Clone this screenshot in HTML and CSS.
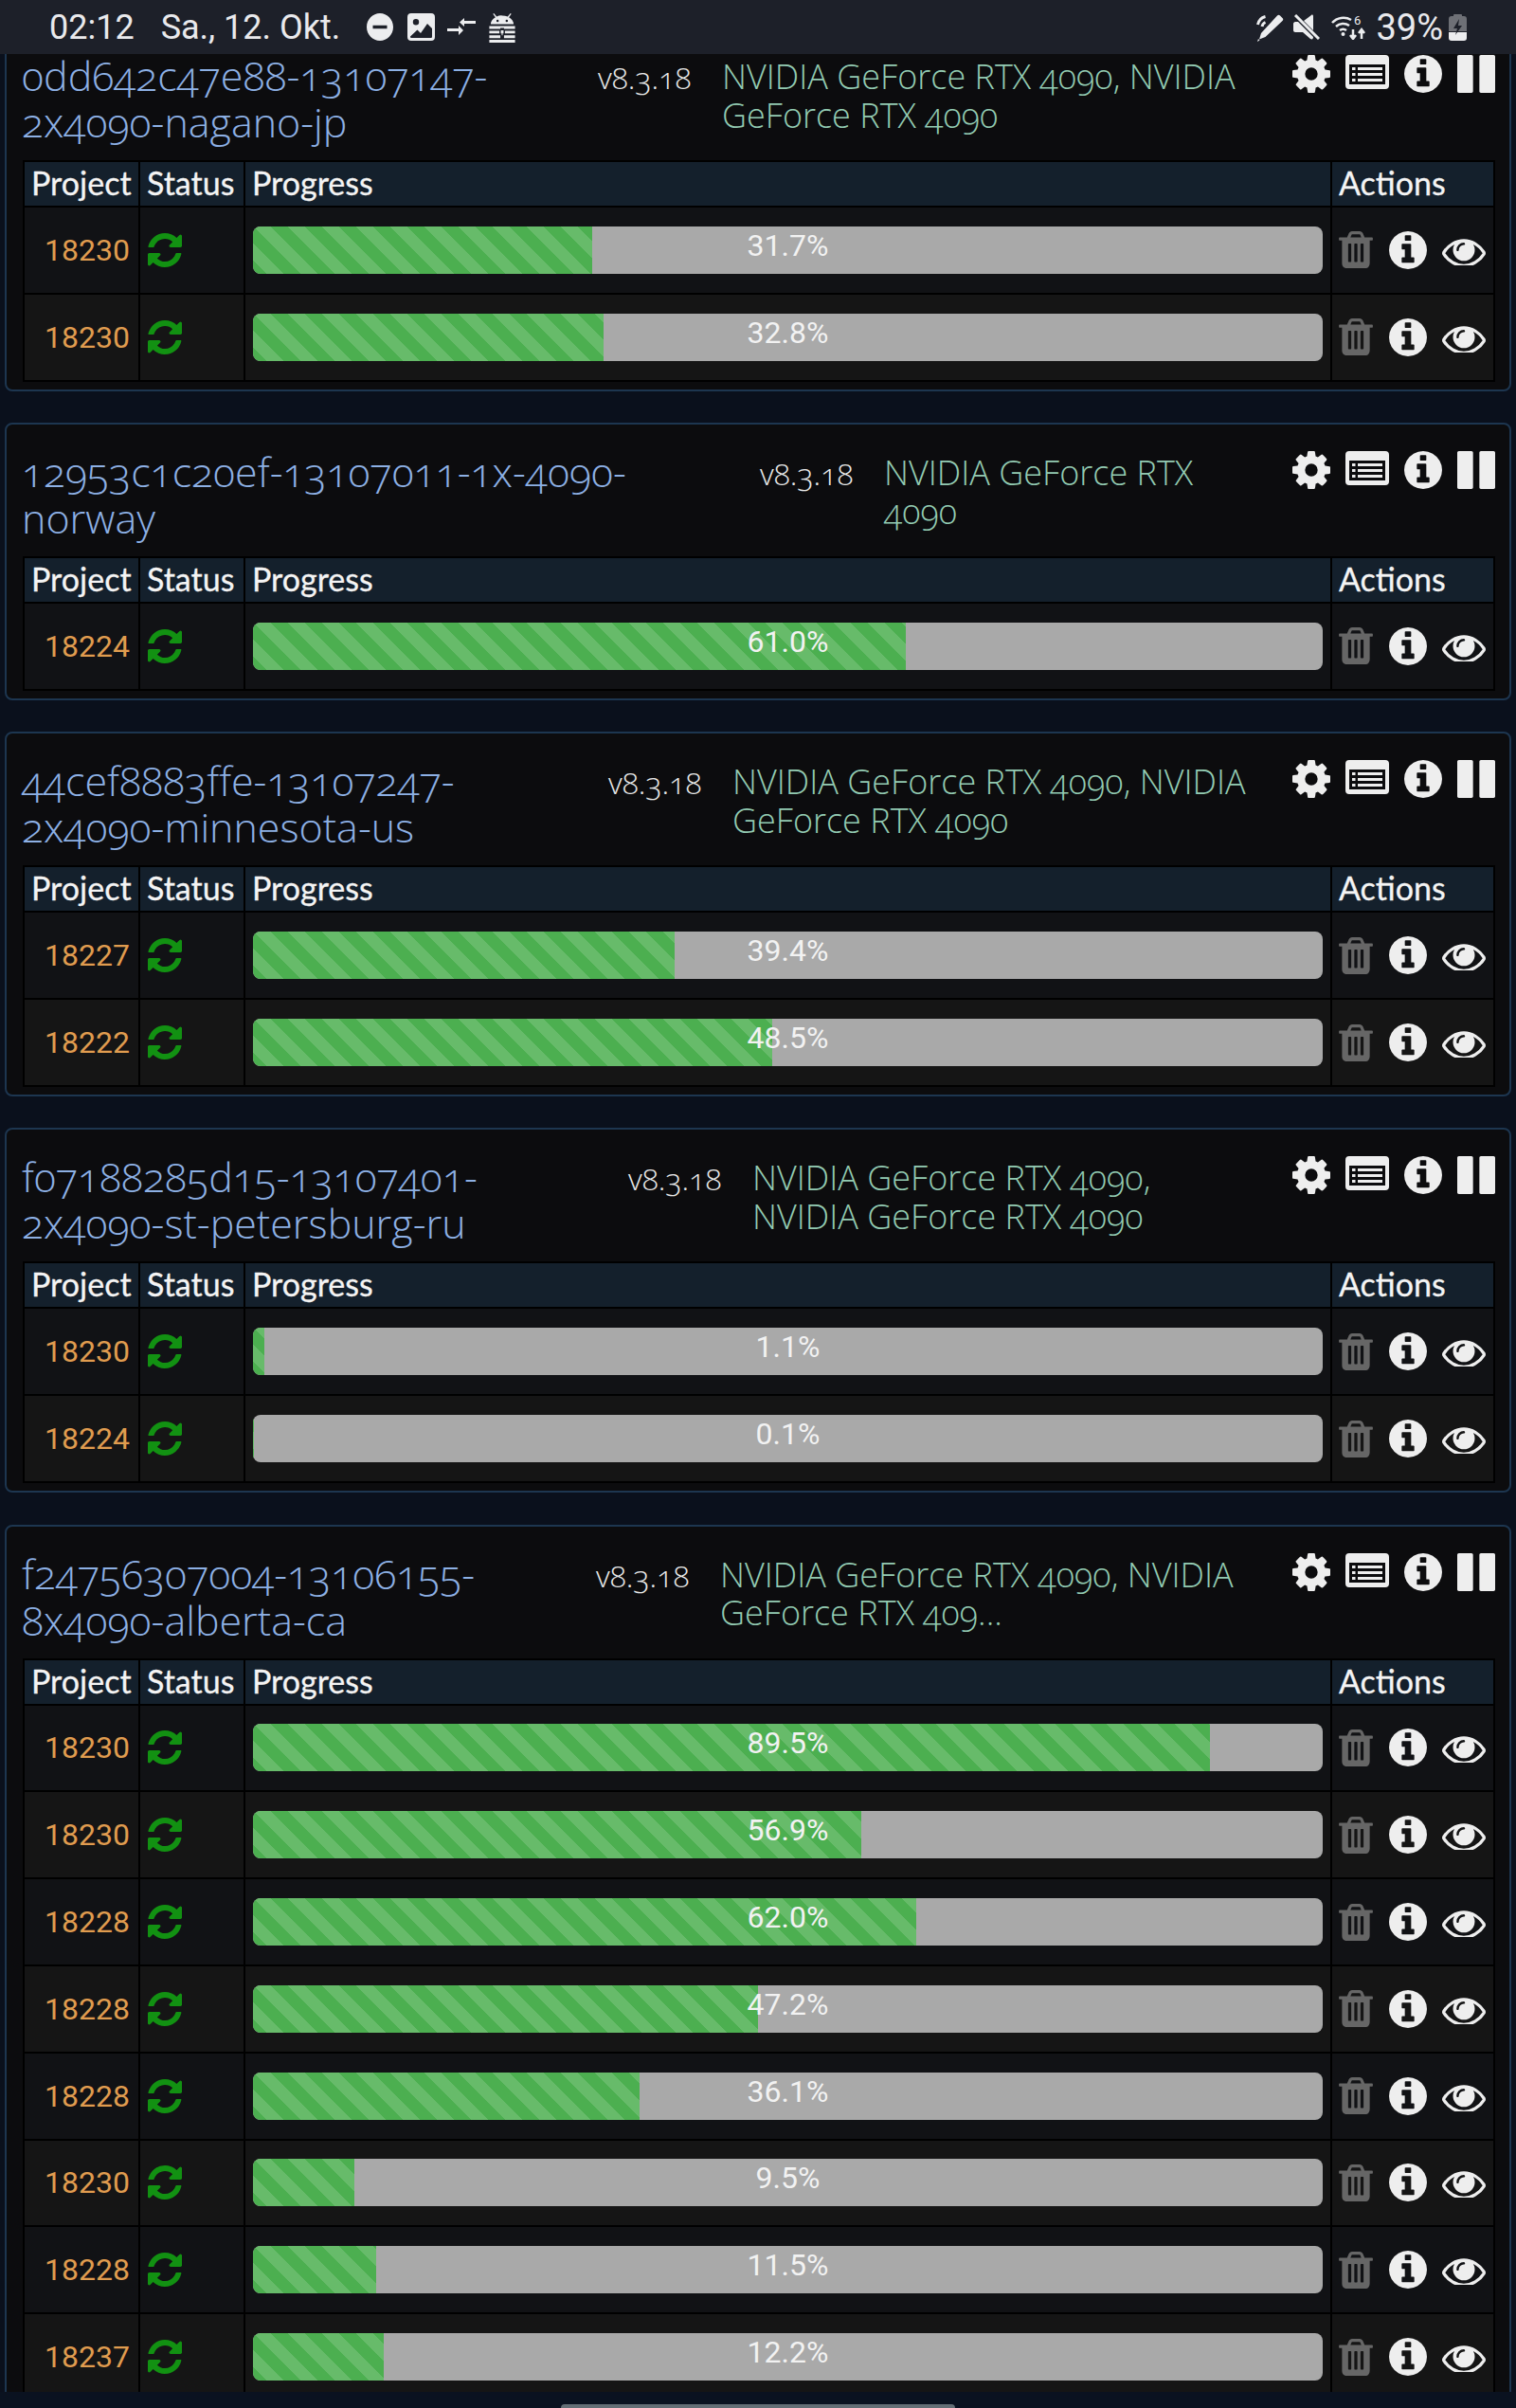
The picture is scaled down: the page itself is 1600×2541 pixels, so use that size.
FILE: index.html
```html
<!DOCTYPE html>
<html lang="de">
<head>
<meta charset="utf-8">
<title>Instances</title>
<link rel="stylesheet" href="styles.css">
</head>
<body>
<svg class="defs" width="0" height="0" aria-hidden="true">
  <symbol id="i-cog" viewBox="128 128 1536 1536"><path fill-rule="evenodd" d="M1152 896q0-106-75-181t-181-75-181 75-75 181 75 181 181 75 181-75 75-181zm512-109v222q0 12-8 23t-20 13l-185 28q-19 54-39 91 35 50 107 138 10 12 10 25t-9 23q-27 37-99 108t-94 71q-12 0-26-9l-138-108q-44 23-91 38-16 136-29 186-7 28-36 28h-222q-14 0-24.5-8.5t-11.5-21.5l-28-184q-49-16-90-37l-141 107q-10 9-25 9-14 0-25-11-126-114-165-168-7-10-7-23 0-12 8-23 15-21 51-66.5t54-70.5q-27-50-41-99l-183-27q-13-2-21-12.5t-8-23.5v-222q0-12 8-23t19-13l186-28q14-46 39-92-40-57-107-138-10-12-10-24 0-10 9-23 26-36 98.5-107.5t94.5-71.5q13 0 26 10l138 107q44-23 91-38 16-136 29-186 7-28 36-28h222q14 0 24.5 8.5t11.5 21.5l28 184q49 16 90 37l142-107q9-9 24-9 13 0 25 10 129 119 165 170 7 8 7 22 0 12-8 23-15 21-51 66.5t-54 70.5q26 50 41 98l183 28q13 2 21 12.5t8 23.5z"/></symbol>
  <symbol id="i-info" viewBox="128 128 1536 1536"><path fill-rule="evenodd" d="M1152 1376v-160q0-14-9-23t-23-9h-96v-512q0-14-9-23t-23-9h-320q-14 0-23 9t-9 23v160q0 14 9 23t23 9h96v320h-96q-14 0-23 9t-9 23v160q0 14 9 23t23 9h448q14 0 23-9t9-23zm-128-896v-160q0-14-9-23t-23-9h-192q-14 0-23 9t-9 23v160q0 14 9 23t23 9h192q14 0 23-9t9-23zm640 416q0 209-103 385.5t-279.5 279.5-385.5 103-385.5-103-279.5-279.5-103-385.5 103-385.5 279.5-279.5 385.5-103 385.5 103 279.5 279.5 103 385.5z"/></symbol>
  <symbol id="i-pause" viewBox="128 128 1536 1536"><path d="M1664 192v1408q0 26-19 45t-45 19h-512q-26 0-45-19t-19-45v-1408q0-26 19-45t45-19h512q26 0 45 19t19 45zm-896 0v1408q0 26-19 45t-45 19h-512q-26 0-45-19t-19-45v-1408q0-26 19-45t45-19h512q26 0 45 19t19 45z"/></symbol>
  <symbol id="i-list" viewBox="0 0 46 36"><path fill-rule="evenodd" d="M4 0h38a4 4 0 0 1 4 4v28a4 4 0 0 1-4 4H4a4 4 0 0 1-4-4V4a4 4 0 0 1 4-4zM4 10v21h38V10zM7 13h3.500v3H7zM13 13h26v3H13zM7 19h3.500v3H7zM13 19h26v3H13zM7 25h3.500v3H7zM13 25h26v3H13z"/></symbol>
  <symbol id="i-trash" viewBox="192 128 1408 1536"><path fill-rule="evenodd" d="M704 1376v-704q0-14-9-23t-23-9h-64q-14 0-23 9t-9 23v704q0 14 9 23t23 9h64q14 0 23-9t9-23zm256 0v-704q0-14-9-23t-23-9h-64q-14 0-23 9t-9 23v704q0 14 9 23t23 9h64q14 0 23-9t9-23zm256 0v-704q0-14-9-23t-23-9h-64q-14 0-23 9t-9 23v704q0 14 9 23t23 9h64q14 0 23-9t9-23zm-544-992h448l-48-117q-7-9-17-11h-317q-10 2-17 11zm928 32v64q0 14-9 23t-23 9h-96v948q0 83-47 143.5t-113 60.5h-832q-66 0-113-58.5t-47-141.5v-952h-96q-14 0-23-9t-9-23v-64q0-14 9-23t23-9h309l70-167q15-37 54-63t79-26h320q40 0 79 26t54 63l70 167h309q14 0 23 9t9 23z"/></symbol>
  <symbol id="i-eye" viewBox="0 336 1792 1120"><path fill-rule="evenodd" d="M1664 960q-152-236-381-353 61 104 61 225 0 185-131.500 316.500t-316.500 131.500-316.500-131.500-131.500-316.500q0-121 61-225-229 117-381 353 133 205 333.500 326.500t434.500 121.500 434.500-121.500 333.500-326.500zm-720-384q0-20-14-34t-34-14q-125 0-214.500 89.500t-89.500 214.500q0 20 14 34t34 14 34-14 14-34q0-86 61-147t147-61q20 0 34-14t14-34zm848 384q0 34-20 69-140 230-376.500 368.500t-499.500 138.500-499.500-139-376.500-368q-20-35-20-69t20-69q140-229 376.500-368t499.500-139 499.500 139 376.500 368q20 35 20 69z"/></symbol>
  <symbol id="i-refresh" viewBox="128 128 1536 1536"><path d="M1639 1056q0 5-1 7-64 268-268 434.500t-478 166.500q-146 0-282.500-55t-243.500-157l-129 129q-19 19-45 19t-45-19-19-45v-448q0-26 19-45t45-19h448q26 0 45 19t19 45-19 45l-137 137q71 66 161 102t187 36q134 0 250-65t186-179q11-17 53-117 8-23 30-23h192q13 0 22.500 9.500t9.500 22.500zm25-800v448q0 26-19 45t-45 19h-448q-26 0-45-19t-19-45 19-45l138-138q-148-137-349-137-134 0-250 65t-186 179q-11 17-53 117-8 23-30 23h-199q-13 0-22.500-9.500t-9.500-22.500v-7q65-268 270-434.500t480-166.500q146 0 284 55.500t245 156.500l130-129q19-19 45-19t45 19 19 45z"/></symbol>
</svg>

<div class="phone">
  <header class="statusbar">
    <div class="sb-left">
      <span class="sb-time">02:12</span>
      <span class="sb-date">Sa., 12. Okt.</span>
      <svg class="sb-ic sb-dnd" width="28" height="29" viewBox="0 0 28 29"><path fill-rule="evenodd" d="M14 0C21.700 0 28 6.500 28 14.500S21.700 29 14 29 0 22.500 0 14.500 6.300 0 14 0zM6.500 12.800v3.400h15v-3.400z"/></svg>
      <svg class="sb-ic sb-img" width="29" height="29" viewBox="0 0 29 29"><path fill-rule="evenodd" d="M4 0h21a4 4 0 0 1 4 4v21a4 4 0 0 1-4 4H4a4 4 0 0 1-4-4V4a4 4 0 0 1 4-4zM9 6a3.200 3.200 0 1 0 0 6.400A3.200 3.200 0 0 0 9 6zM3 24.500C3 25.500 3.500 26 4.500 26h20c1 0 1.500-.5 1.500-1.500V16l-5-5-7 10-3.500-3.500z"/></svg>
      <svg class="sb-ic sb-arrows" width="30" height="19" viewBox="0 0 30 19"><path d="M13 4.500L18 0v3h12v3H18v3zM0 11h12V8l5 5-5 5v-4H0z"/></svg>
      <svg class="sb-ic sb-lock" width="32" height="32" viewBox="0 0 32 33"><path fill-rule="evenodd" d="M7 1l3 3.600A12 12 0 0 1 16 3.500c2.200 0 4.200.4 6 1.100L25 1l1 .7-2.700 3.700C26.500 7.300 28.500 10 28.500 13h-25c0-3 2-5.700 5.200-7.600L6 1.700zM11 8a1.300 1.300 0 1 0 0 2.600A1.300 1.300 0 0 0 11 8zM21 8a1.300 1.300 0 1 0 0 2.600A1.300 1.300 0 0 0 21 8zM2 15h28v3H18v-1h-4v1H2zM2 20h11v3H2zM19 20h11v3H19zM14.500 19.500h3V23h-1v2h-1v-2h-1zM2 25h12v3H2zM18 25h12v3H18zM2 30h28v3H2z"/></svg>
    </div>
    <div class="sb-right">
      <svg class="sb-ic sb-pen" width="29" height="30" viewBox="0 0 29 30"><path d="M22 2.500c1-1 2-1 3 0l2.500 2.500c1 1 1 2 0 3L9.500 25 3 27.500 5 21zM2 27l1.500 1.500L1 30z"/><path class="sb-line" d="M1.500 12a11 11 0 0 1 8-8.500M6 14a6 6 0 0 1 3.500-4.500"/></svg>
      <svg class="sb-ic sb-mute" width="28" height="27" viewBox="0 0 28 27"><path d="M0 10c0-1 1-2 2-2h3l16 16c0 2-1 3-3 2l-8-7H2c-1 0-2-1-2-2zM11 7l8-6c1-1 2 0 2 1v15z"/><path class="sb-line" d="M2 1l25 25"/></svg>
      <svg class="sb-ic sb-wifi" width="37" height="27" viewBox="0 0 37 27"><path class="sb-line thin" d="M1 9a16 16 0 0 1 20-3M5 13a11 11 0 0 1 14-1M9 17a6 6 0 0 1 7 0"/><circle cx="12.500" cy="21" r="2"/><path class="sb-line thin" d="M23 16v9M20 22l3 4 3-4M32 26v-9M29 20l3-4 3 4"/><text class="sb-six" x="24" y="11">6</text></svg>
      <span class="sb-batt">39%</span>
      <svg class="sb-ic" width="19" height="28" viewBox="0 0 19 28"><path class="sb-empty" d="M5 2V1a1 1 0 0 1 1-1h7a1 1 0 0 1 1 1v1h2a3 3 0 0 1 3 3v13H0V5a3 3 0 0 1 3-3z"/><path d="M0 19h19v6a3 3 0 0 1-3 3H3a3 3 0 0 1-3-3z"/><path d="M11 5L5 15h4l-2 7 7-10h-4z" class="sb-bolt"/></svg>
    </div>
  </header>

  <main class="viewport">
    <div class="cards">

      <section class="card">
        <div class="head">
          <h4 class="name w1">0dd642c47e88-13107147-2x4090-nagano-jp</h4>
          <span class="ver">v8.3.18</span>
          <span class="gpu">NVIDIA GeForce RTX 4090, NVIDIA GeForce RTX 4090</span>
          <div class="tools"><svg class="t-cog"><use href="#i-cog"/></svg><svg class="t-list"><use href="#i-list"/></svg><svg class="t-info"><use href="#i-info"/></svg><svg class="t-pause"><use href="#i-pause"/></svg></div>
        </div>
        <div class="tbl">
          <div class="th">Project</div><div class="th">Status</div><div class="th">Progress</div><div class="th">Actions</div>
          <div class="td num">18230</div><div class="td st"><svg class="ref"><use href="#i-refresh"/></svg></div><div class="td pg"><div class="bar"><div class="fill" style="width:31.7%"></div><span class="pct">31.7%</span></div></div><div class="td act"><svg class="a-trash"><use href="#i-trash"/></svg><svg class="a-info"><use href="#i-info"/></svg><svg class="a-eye"><use href="#i-eye"/></svg></div>
          <div class="td num alt">18230</div><div class="td st alt"><svg class="ref"><use href="#i-refresh"/></svg></div><div class="td pg alt"><div class="bar"><div class="fill" style="width:32.8%"></div><span class="pct">32.8%</span></div></div><div class="td act alt"><svg class="a-trash"><use href="#i-trash"/></svg><svg class="a-info"><use href="#i-info"/></svg><svg class="a-eye"><use href="#i-eye"/></svg></div>
        </div>
      </section>

      <section class="card">
        <div class="head">
          <h4 class="name w2">12953c1c20ef-13107011-1x-4090-norway</h4>
          <span class="ver">v8.3.18</span>
          <span class="gpu">NVIDIA GeForce RTX 4090</span>
          <div class="tools"><svg class="t-cog"><use href="#i-cog"/></svg><svg class="t-list"><use href="#i-list"/></svg><svg class="t-info"><use href="#i-info"/></svg><svg class="t-pause"><use href="#i-pause"/></svg></div>
        </div>
        <div class="tbl">
          <div class="th">Project</div><div class="th">Status</div><div class="th">Progress</div><div class="th">Actions</div>
          <div class="td num">18224</div><div class="td st"><svg class="ref"><use href="#i-refresh"/></svg></div><div class="td pg"><div class="bar"><div class="fill" style="width:61%"></div><span class="pct">61.0%</span></div></div><div class="td act"><svg class="a-trash"><use href="#i-trash"/></svg><svg class="a-info"><use href="#i-info"/></svg><svg class="a-eye"><use href="#i-eye"/></svg></div>
        </div>
      </section>

      <section class="card">
        <div class="head">
          <h4 class="name w3">44cef8883ffe-13107247-2x4090-minnesota-us</h4>
          <span class="ver">v8.3.18</span>
          <span class="gpu">NVIDIA GeForce RTX 4090, NVIDIA GeForce RTX 4090</span>
          <div class="tools"><svg class="t-cog"><use href="#i-cog"/></svg><svg class="t-list"><use href="#i-list"/></svg><svg class="t-info"><use href="#i-info"/></svg><svg class="t-pause"><use href="#i-pause"/></svg></div>
        </div>
        <div class="tbl">
          <div class="th">Project</div><div class="th">Status</div><div class="th">Progress</div><div class="th">Actions</div>
          <div class="td num">18227</div><div class="td st"><svg class="ref"><use href="#i-refresh"/></svg></div><div class="td pg"><div class="bar"><div class="fill" style="width:39.4%"></div><span class="pct">39.4%</span></div></div><div class="td act"><svg class="a-trash"><use href="#i-trash"/></svg><svg class="a-info"><use href="#i-info"/></svg><svg class="a-eye"><use href="#i-eye"/></svg></div>
          <div class="td num alt">18222</div><div class="td st alt"><svg class="ref"><use href="#i-refresh"/></svg></div><div class="td pg alt"><div class="bar"><div class="fill" style="width:48.5%"></div><span class="pct">48.5%</span></div></div><div class="td act alt"><svg class="a-trash"><use href="#i-trash"/></svg><svg class="a-info"><use href="#i-info"/></svg><svg class="a-eye"><use href="#i-eye"/></svg></div>
        </div>
      </section>

      <section class="card">
        <div class="head">
          <h4 class="name w4">f07188285d15-13107401-2x4090-st-petersburg-ru</h4>
          <span class="ver">v8.3.18</span>
          <span class="gpu">NVIDIA GeForce RTX 4090, NVIDIA GeForce RTX 4090</span>
          <div class="tools"><svg class="t-cog"><use href="#i-cog"/></svg><svg class="t-list"><use href="#i-list"/></svg><svg class="t-info"><use href="#i-info"/></svg><svg class="t-pause"><use href="#i-pause"/></svg></div>
        </div>
        <div class="tbl">
          <div class="th">Project</div><div class="th">Status</div><div class="th">Progress</div><div class="th">Actions</div>
          <div class="td num">18230</div><div class="td st"><svg class="ref"><use href="#i-refresh"/></svg></div><div class="td pg"><div class="bar"><div class="fill" style="width:1.1%"></div><span class="pct">1.1%</span></div></div><div class="td act"><svg class="a-trash"><use href="#i-trash"/></svg><svg class="a-info"><use href="#i-info"/></svg><svg class="a-eye"><use href="#i-eye"/></svg></div>
          <div class="td num alt">18224</div><div class="td st alt"><svg class="ref"><use href="#i-refresh"/></svg></div><div class="td pg alt"><div class="bar"><div class="fill" style="width:0.1%"></div><span class="pct">0.1%</span></div></div><div class="td act alt"><svg class="a-trash"><use href="#i-trash"/></svg><svg class="a-info"><use href="#i-info"/></svg><svg class="a-eye"><use href="#i-eye"/></svg></div>
        </div>
      </section>

      <section class="card">
        <div class="head">
          <h4 class="name w5">f24756307004-13106155-8x4090-alberta-ca</h4>
          <span class="ver">v8.3.18</span>
          <span class="gpu">NVIDIA GeForce RTX 4090, NVIDIA GeForce RTX 409...</span>
          <div class="tools"><svg class="t-cog"><use href="#i-cog"/></svg><svg class="t-list"><use href="#i-list"/></svg><svg class="t-info"><use href="#i-info"/></svg><svg class="t-pause"><use href="#i-pause"/></svg></div>
        </div>
        <div class="tbl">
          <div class="th">Project</div><div class="th">Status</div><div class="th">Progress</div><div class="th">Actions</div>
          <div class="td num">18230</div><div class="td st"><svg class="ref"><use href="#i-refresh"/></svg></div><div class="td pg"><div class="bar"><div class="fill" style="width:89.5%"></div><span class="pct">89.5%</span></div></div><div class="td act"><svg class="a-trash"><use href="#i-trash"/></svg><svg class="a-info"><use href="#i-info"/></svg><svg class="a-eye"><use href="#i-eye"/></svg></div>
          <div class="td num alt">18230</div><div class="td st alt"><svg class="ref"><use href="#i-refresh"/></svg></div><div class="td pg alt"><div class="bar"><div class="fill" style="width:56.9%"></div><span class="pct">56.9%</span></div></div><div class="td act alt"><svg class="a-trash"><use href="#i-trash"/></svg><svg class="a-info"><use href="#i-info"/></svg><svg class="a-eye"><use href="#i-eye"/></svg></div>
          <div class="td num">18228</div><div class="td st"><svg class="ref"><use href="#i-refresh"/></svg></div><div class="td pg"><div class="bar"><div class="fill" style="width:62%"></div><span class="pct">62.0%</span></div></div><div class="td act"><svg class="a-trash"><use href="#i-trash"/></svg><svg class="a-info"><use href="#i-info"/></svg><svg class="a-eye"><use href="#i-eye"/></svg></div>
          <div class="td num alt">18228</div><div class="td st alt"><svg class="ref"><use href="#i-refresh"/></svg></div><div class="td pg alt"><div class="bar"><div class="fill" style="width:47.2%"></div><span class="pct">47.2%</span></div></div><div class="td act alt"><svg class="a-trash"><use href="#i-trash"/></svg><svg class="a-info"><use href="#i-info"/></svg><svg class="a-eye"><use href="#i-eye"/></svg></div>
          <div class="td num">18228</div><div class="td st"><svg class="ref"><use href="#i-refresh"/></svg></div><div class="td pg"><div class="bar"><div class="fill" style="width:36.1%"></div><span class="pct">36.1%</span></div></div><div class="td act"><svg class="a-trash"><use href="#i-trash"/></svg><svg class="a-info"><use href="#i-info"/></svg><svg class="a-eye"><use href="#i-eye"/></svg></div>
          <div class="td num alt">18230</div><div class="td st alt"><svg class="ref"><use href="#i-refresh"/></svg></div><div class="td pg alt"><div class="bar"><div class="fill" style="width:9.5%"></div><span class="pct">9.5%</span></div></div><div class="td act alt"><svg class="a-trash"><use href="#i-trash"/></svg><svg class="a-info"><use href="#i-info"/></svg><svg class="a-eye"><use href="#i-eye"/></svg></div>
          <div class="td num">18228</div><div class="td st"><svg class="ref"><use href="#i-refresh"/></svg></div><div class="td pg"><div class="bar"><div class="fill" style="width:11.5%"></div><span class="pct">11.5%</span></div></div><div class="td act"><svg class="a-trash"><use href="#i-trash"/></svg><svg class="a-info"><use href="#i-info"/></svg><svg class="a-eye"><use href="#i-eye"/></svg></div>
          <div class="td num alt">18237</div><div class="td st alt"><svg class="ref"><use href="#i-refresh"/></svg></div><div class="td pg alt"><div class="bar"><div class="fill" style="width:12.2%"></div><span class="pct">12.2%</span></div></div><div class="td act alt"><svg class="a-trash"><use href="#i-trash"/></svg><svg class="a-info"><use href="#i-info"/></svg><svg class="a-eye"><use href="#i-eye"/></svg></div>
        </div>
      </section>

    </div>
  </main>

  <footer class="navbar"><span class="pill"></span></footer>
</div>
</body>
</html>
```

FILE: styles.css
```css
* { box-sizing: border-box; }
html, body { margin: 0; padding: 0; }
body { background: #0a101c; font-family: "Lato", "Open Sans", sans-serif; color: #eee; }
.defs { position: absolute; }

.phone { width: 1600px; height: 2541px; display: flex; flex-direction: column; overflow: hidden; }

/* status bar */
.statusbar { flex: 0 0 57px; background: #1d2029; display: flex; justify-content: space-between; align-items: center; padding: 0 52px 0 52px; color: #e9e9ec; font-family: "Roboto", sans-serif; font-size: 36px; }
.sb-left, .sb-right { display: flex; align-items: center; }
.sb-time { margin-right: 28px; }
.sb-date { margin-right: 28px; }
.sb-ic { fill: #ecedef; flex: none; }
.sb-dnd { margin-right: 15px; }
.sb-img { margin-right: 13px; }
.sb-arrows { margin-right: 12px; }
.sb-pen { margin-right: 10px; }
.sb-mute { margin-right: 12px; }
.sb-wifi { margin-right: 10px; }
.sb-line { fill: none; stroke: #ecedef; stroke-width: 3; }
.sb-line.thin { stroke-width: 2.500; }
.sb-six { font-size: 13px; font-family: "Roboto", sans-serif; }
.sb-empty { fill: #6e7076; }
.sb-bolt { fill: #1d2029; }
.sb-batt { margin-right: 6px; font-size: 38px; }

/* scrolled region */
.viewport { flex: 1 1 auto; overflow: hidden; min-height: 0; background: #0a101c; }
.cards { margin-top: -29px; padding: 0 5px; display: flex; flex-direction: column; gap: 33.500px; }

.card { background: #0c0c0e; border: 2px solid #1d3650; border-radius: 8px; padding: 0 15px 8px 17px; }

.head { display: flex; align-items: flex-start; height: 139px; padding-top: 25px; margin: 0 1px 0 -1px; }
.name { margin: 0; font-family: "Open Sans", sans-serif; font-weight: 300; font-size: 43px; line-height: 49px; color: #8db0e4; font-variant-numeric: oldstyle-nums; overflow-wrap: anywhere; flex: none; }
.w1 { width: 608px; padding-right: 90px; }
.w2 { width: 779px; padding-right: 110px; }
.w3 { width: 619px; padding-right: 110px; }
.w4 { width: 640px; padding-right: 110px; }
.w5 { width: 606px; padding-right: 90px; }
.ver { flex: none; width: 131px; padding-top: 3px; font-family: "Open Sans", sans-serif; font-weight: 300; font-size: 32px; line-height: 48px; color: #e8e8e8; font-variant-numeric: oldstyle-nums; }
.gpu { flex: 1 1 0; min-width: 0; padding-top: 6px; padding-right: 39px; font-family: "Open Sans", sans-serif; font-weight: 300; font-size: 36px; line-height: 40.500px; color: #93cbb2; font-variant-numeric: oldstyle-nums; }
.tools { flex: none; display: flex; align-items: flex-start; gap: 16px; fill: #eeeeee; margin-top: 3px; margin-right: -1px; }
.t-cog { width: 40px; height: 40px; }
.t-list { width: 46px; height: 36px; }
.t-info { width: 40px; height: 40px; }
.t-pause { width: 40px; height: 40px; }

/* table */
.tbl { display: grid; grid-template-columns: 120px 109px 1145px 170px; grid-template-rows: 46px; grid-auto-rows: 89.800px; gap: 2px; padding: 2px; background: #000; }
.th { background: #14202c; color: #f4f4f4; font-size: 34px; line-height: 44px; padding-left: 7px; font-weight: 400; white-space: nowrap; -webkit-text-stroke: .3px #f4f4f4; }
.td { background: #111215; display: flex; align-items: center; }
.td.alt { background: #151515; }
.num { justify-content: flex-end; padding-right: 9px; font-family: "Roboto", sans-serif; font-size: 32px; color: #e09c4f; font-weight: 400; }
.st { padding-left: 8px; }
.ref { width: 36px; height: 36px; fill: #129112; }
.pg { padding: 0 8px; }
.bar { position: relative; width: 100%; height: 50px; background: #a9a9a9; border-radius: 8px; overflow: hidden; }
.fill { height: 100%; background-color: #4caf50; background-image: linear-gradient(45deg, rgba(255,255,255,.15) 25%, transparent 25%, transparent 50%, rgba(255,255,255,.15) 50%, rgba(255,255,255,.15) 75%, transparent 75%, transparent); background-size: 36px 36px; }
.pct { position: absolute; left: 0; right: 0; top: 0; text-align: center; font-family: "Roboto", sans-serif; font-weight: 400; font-size: 32px; line-height: 40px; color: #f2f2f2; }
.act { padding-left: 7px; align-items: center; }
.a-trash { width: 36px; height: 39px; fill: #666; margin-right: 17px; }
.a-info { width: 40px; height: 40px; fill: #eee; margin-right: 16px; }
.a-eye { width: 46px; height: 29px; fill: #eee; margin-top: 3px; }

/* navigation */
.navbar { flex: 0 0 17px; background: #0a1220; display: flex; justify-content: center; align-items: flex-end; }
.pill { width: 416px; height: 4px; background: #636e75; border-radius: 4px 4px 0 0; }
```
